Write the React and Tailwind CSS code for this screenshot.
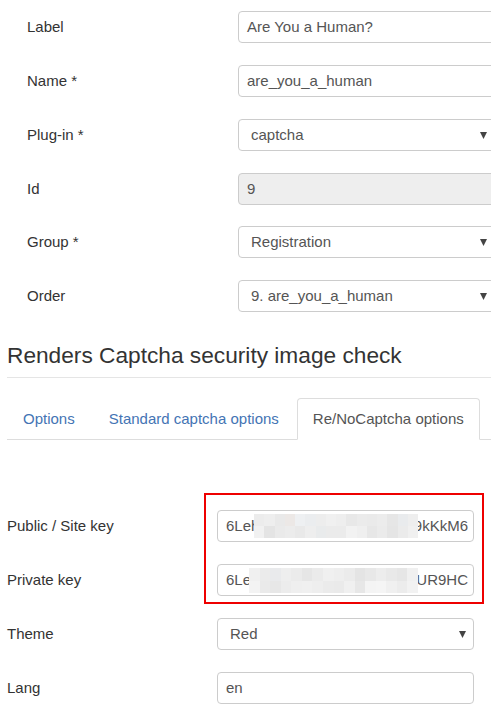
import React from 'react';

const topRows = [
  { label: 'Label', value: 'Are You a Human?', type: 'input' },
  { label: 'Name *', value: 'are_you_a_human', type: 'input' },
  { label: 'Plug-in *', value: 'captcha', type: 'select' },
  { label: 'Id', value: '9', type: 'readonly' },
  { label: 'Group *', value: 'Registration', type: 'select' },
  { label: 'Order', value: '9. are_you_a_human', type: 'select' },
];

const pixA = [
  '#ececec', '#eeeeee', '#e9e9e9', '#ece8e6', '#eef0f2', '#ebedef', '#ededed', '#f0f0f0',
  '#eeeeee', '#e8e8e8', '#ebebeb', '#eaeaea', '#ececec', '#e6e6e6', '#e9ebed', '#eeeeee',
  '#f1f1f1', '#e4e4e4', '#eaeaea', '#ececec', '#e9e9e9', '#eeeeee', '#e9ebec', '#ebebeb',
  '#ebebeb', '#f2f2f2', '#efefef', '#e7e7e7', '#ebebeb', '#e5e5e5', '#ebebeb', '#f0f0f0',
];

const pixB = [
  '#f0f0f0', '#ebebeb', '#e9eaec', '#eeeeee', '#ebebeb', '#e6e6e6', '#ebebeb', '#f0f0f0',
  '#eeeeee', '#ebebeb', '#e4e4e4', '#e8e8e8', '#ededed', '#e9e9e9', '#e6e6e6', '#f0f0f0',
  '#f3f3f3', '#eaeaea', '#e7e7e7', '#ececec', '#efefef', '#f0f0f0', '#eeeeee', '#ebebeb',
  '#eaeaea', '#f0f0f0', '#e7e7e7', '#f4f4f4', '#f5f5f5', '#f0f0f0', '#ececec', '#f2f2f2',
];

const Caret = () => (
  <svg width="7" height="8" viewBox="0 0 7 8" className="shrink-0">
    <path d="M0 1 H7 L3.5 8 Z" fill="#444" />
  </svg>
);

const Field = ({ type, value, className }) => {
  if (type === 'select') {
    return (
      <div className={`h-[32px] flex items-center justify-between pl-[12px] pr-[7px] border border-[#ccc] rounded-[4px] bg-white text-[#555] ${className}`}>
        <span>{value}</span>
        <Caret />
      </div>
    );
  }
  return (
    <div
      className={`h-[32px] flex items-center px-[8px] border border-[#ccc] rounded-[4px] text-[#555] ${
        type === 'readonly' ? 'bg-[#eee]' : 'bg-white'
      } ${className}`}
    >
      {value}
    </div>
  );
};

const Pixelated = ({ colors, className }) => (
  <div className={`absolute grid grid-cols-16 grid-rows-2 ${className}`}>
    {colors.map((c, i) => (
      <div key={i} style={{ backgroundColor: c }} />
    ))}
  </div>
);

const KeyField = ({ left, right, colors, blurClass }) => (
  <div className="relative h-[32px] w-[257px] flex items-center justify-between pl-[8px] pr-[5px] border border-[#ccc] rounded-[4px] bg-white text-[#555] overflow-hidden">
    <span>{left}</span>
    <span>{right}</span>
    <Pixelated colors={colors} className={blurClass} />
  </div>
);

export default function App() {
  return (
    <div className="relative w-[491px] h-[728px] overflow-hidden bg-white text-[15px] text-[#333] font-['Liberation_Sans',Arial,sans-serif]">
      <div className="flex flex-col pt-[11px] pl-[27px]">
        {topRows.map((r, i) => (
          <div key={r.label} className={`flex items-center h-[32px] ${i === 4 ? 'mt-[21px]' : i > 0 ? 'mt-[22px]' : ''}`}>
            <div className="w-[211px] shrink-0">{r.label}</div>
            <Field type={r.type} value={r.value} className="w-[257px] shrink-0" />
          </div>
        ))}
      </div>

      <h3 className="ml-[7px] mt-[31px] text-[22.7px] leading-[25px] text-[#333]">
        Renders Captcha security image check
      </h3>
      <div className="ml-[7px] mt-[9px] border-t border-[#e5e5e5]" />

      <ul className="flex ml-[7px] mt-[20px] border-b border-[#ddd]">
        <li className="-mb-px mr-[2px]">
          <span className="h-[42px] flex items-center px-[15px] border border-transparent rounded-t-[4px] text-[#4474b4]">
            Options
          </span>
        </li>
        <li className="-mb-px mr-[2px]">
          <span className="h-[42px] flex items-center px-[15px] border border-transparent rounded-t-[4px] text-[#4474b4]">
            Standard captcha options
          </span>
        </li>
        <li className="-mb-px mr-[2px]">
          <span className="h-[42px] flex items-center px-[15px] border border-[#ddd] border-b-white rounded-t-[4px] bg-white text-[#555]">
            Re/NoCaptcha options
          </span>
        </li>
      </ul>

      <div className="flex flex-col gap-[22px] mt-[70px] pl-[7px]">
        <div className="flex items-center h-[32px]">
          <div className="w-[210px] shrink-0">Public / Site key</div>
          <KeyField
            left="6Leh"
            right="9kKkM6"
            colors={pixA}
            blurClass="left-[36px] top-[3px] w-[164px] h-[24px]"
          />
        </div>
        <div className="flex items-center h-[32px]">
          <div className="w-[210px] shrink-0">Private key</div>
          <KeyField
            left="6Le"
            right="UR9HC"
            colors={pixB}
            blurClass="left-[31px] top-[3px] w-[169px] h-[25px]"
          />
        </div>
        <div className="flex items-center h-[32px]">
          <div className="w-[210px] shrink-0">Theme</div>
          <Field type="select" value="Red" className="w-[257px]" />
        </div>
        <div className="flex items-center h-[32px]">
          <div className="w-[210px] shrink-0">Lang</div>
          <Field type="input" value="en" className="w-[257px]" />
        </div>
      </div>

      <div className="absolute left-[204px] top-[493px] w-[280px] h-[111px] border-2 border-[#ee0000]" />
    </div>
  );
}
